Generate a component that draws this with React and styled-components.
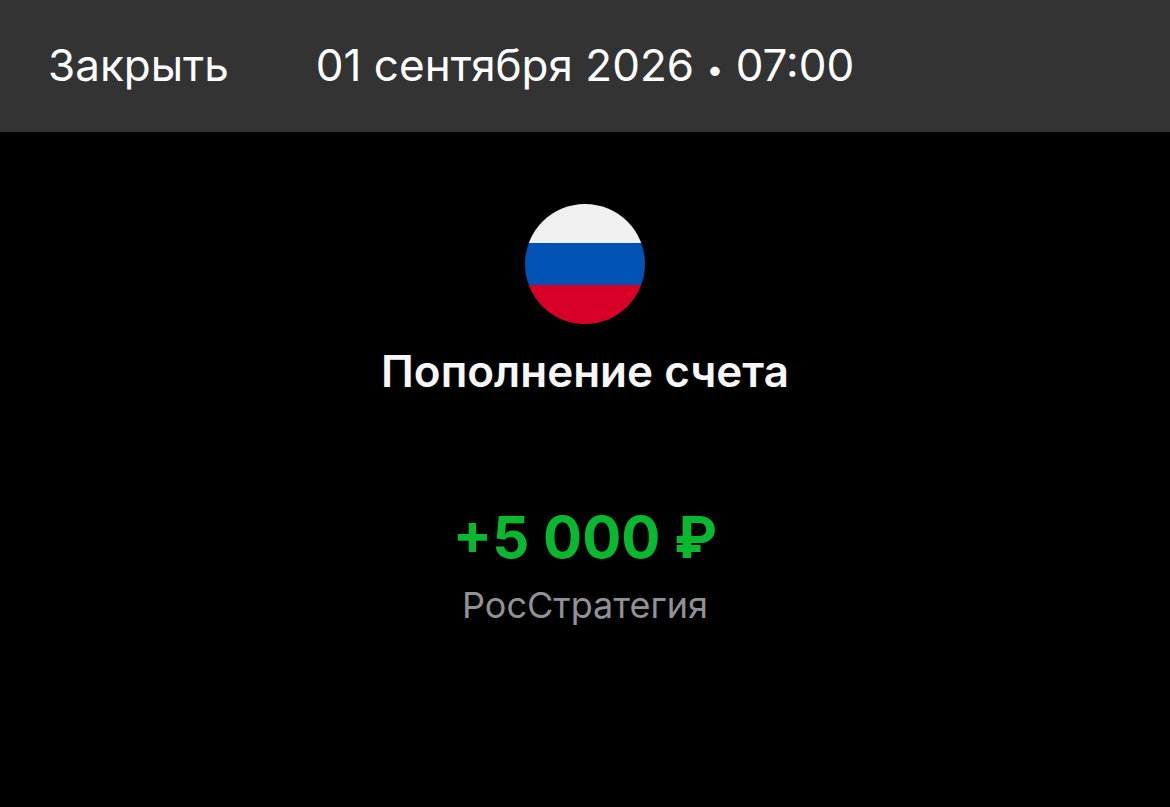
import React from "react";
import styled, { createGlobalStyle } from "styled-components";

const GlobalStyle = createGlobalStyle`
  * {
    box-sizing: border-box;
  }

  body {
    margin: 0;
    background: #000;
    color: #fff;
    font-family: Inter, "Liberation Sans", sans-serif;
  }
`;

const Page = styled.div`
  display: flex;
  flex-direction: column;
  min-height: 100vh;
`;

const Header = styled.header`
  display: grid;
  grid-template-columns: 1fr auto 1fr;
  align-items: center;
  padding: 40px 48px 42px;
  background: #333;
  font-size: 44px;
  line-height: 50px;
`;

const CloseButton = styled.button`
  justify-self: start;
  padding: 0;
  border: 0;
  background: none;
  color: inherit;
  font: inherit;
  cursor: pointer;
`;

const DateTime = styled.time`
  white-space: nowrap;
`;

const Dot = styled.span`
  font-size: 30px;
  line-height: 1;
  vertical-align: middle;
`;

const Operation = styled.main`
  display: flex;
  flex-direction: column;
  align-items: center;
  padding: 72px 48px;
  text-align: center;
`;

const Flag = styled.svg`
  width: 120px;
  height: 120px;
`;

const Title = styled.h1`
  margin: 20px 0 0;
  color: #f7f7f8;
  font-size: 44px;
  font-weight: 600;
  line-height: 54px;
`;

const Amount = styled.p`
  margin: 100px 0 0;
  color: #08b82f;
  font-size: 58px;
  font-weight: 700;
  line-height: 78px;
`;

const Sender = styled.p`
  margin: 8px 0 0;
  color: #919198;
  font-size: 36px;
  line-height: 42px;
`;

const RussianFlag = () => {
  return (
    <Flag viewBox="0 0 120 120" role="img" aria-label="RUB">
      <clipPath id="circle">
        <circle cx="60" cy="60" r="60" />
      </clipPath>
      <g clipPath="url(#circle)">
        <rect width="120" height="39" fill="#f0f0f0" />
        <rect y="39" width="120" height="42" fill="#0052b4" />
        <rect y="81" width="120" height="39" fill="#d80027" />
      </g>
    </Flag>
  );
};

const App = () => {
  return (
    <Page>
      <GlobalStyle />
      <Header>
        <CloseButton type="button">Закрыть</CloseButton>
        <DateTime dateTime="2026-09-01T07:00">
          01 сентября 2026 <Dot>•</Dot> 07:00
        </DateTime>
      </Header>
      <Operation>
        <RussianFlag />
        <Title>Пополнение счета</Title>
        <Amount>+5 000 ₽</Amount>
        <Sender>РосСтратегия</Sender>
      </Operation>
    </Page>
  );
};

export default App;
